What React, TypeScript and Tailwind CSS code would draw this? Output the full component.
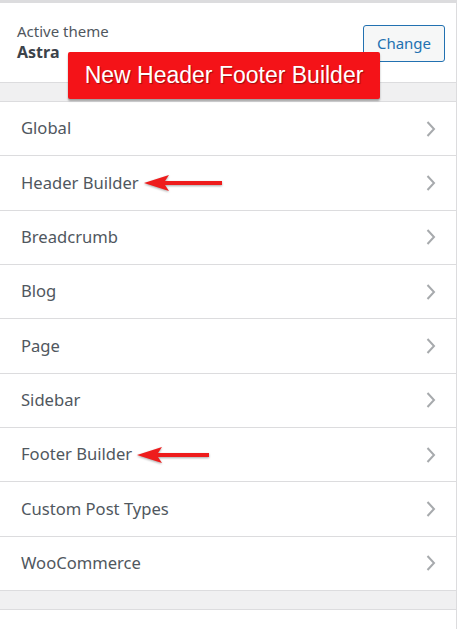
import React from "react";

const items = [
  { label: "Global" },
  { label: "Header Builder", arrow: 80 },
  { label: "Breadcrumb" },
  { label: "Blog" },
  { label: "Page" },
  { label: "Sidebar" },
  { label: "Footer Builder", arrow: 74 },
  { label: "Custom Post Types" },
  { label: "WooCommerce" },
];

function Arrow({ w }: { w: number }) {
  return (
    <svg width={w} height="18" viewBox={`0 0 ${w} 18`} className="ml-[5px] drop-shadow-[0_1px_1px_rgba(0,0,0,0.35)]">
      <polygon points="0,9 25,1 21,7 21,11 25,17" fill="#ee1c1c" />
      <rect x="19" y="7" width={w - 21} height="4" fill="#ee1c1c" />
    </svg>
  );
}

function Chevron() {
  return (
    <svg width="10" height="18" viewBox="0 0 10 18">
      <polyline points="1.5,2 8,9 1.5,16" fill="none" stroke="#a7aaad" strokeWidth="2" />
    </svg>
  );
}

export default function App() {
  return (
    <div className="w-[460px] h-[629px] bg-white overflow-hidden font-['Noto_Sans',sans-serif]">
      <div className="relative w-[457px] h-full border-r border-[#dcdcde] border-t-[3px] border-t-[#dcdcde]">
        <div className="flex items-start justify-between h-[80px] pl-[17px] pr-[11px] border-b border-[#dcdcde]">
          <div className="pt-[18px]">
            <div className="text-[15px] leading-[21px] text-[#50575e]">Active theme</div>
            <div className="text-[16px] leading-[21px] font-bold text-[#3c434a]">Astra</div>
          </div>
          <button className="mt-[22px] h-[37px] w-[82px] rounded-[3px] border border-[#2271b1] bg-[#f6f7f7] text-[15px] text-[#2271b1]">
            Change
          </button>
        </div>
        <div className="h-[18px] bg-[#f0f0f1]" />
        <div className="border-t border-[#dcdcde]">
          {items.map((it) => (
            <div
              key={it.label}
              className="flex items-center justify-between h-[54.33px] pl-[21px] pr-[20px] border-b border-[#dcdcde]"
            >
              <div className="flex items-center">
                <span className="text-[16.6px] text-[#50575e]">{it.label}</span>
                {it.arrow && <Arrow w={it.arrow} />}
              </div>
              <Chevron />
            </div>
          ))}
        </div>
        <div className="h-[19px] bg-[#f0f0f1] border-b border-[#dcdcde]" />
        <div className="absolute left-[68px] top-[49px] w-[312px] h-[47px] rounded-[2px] bg-[#f41318] shadow-[0_2px_2px_rgba(0,0,0,0.35)] flex items-center justify-center">
          <span className="font-['Liberation_Sans',Arial,sans-serif] text-[23px] text-white [text-shadow:1px_1px_1px_rgba(0,0,0,0.35)]">
            New Header Footer Builder
          </span>
        </div>
      </div>
    </div>
  );
}
